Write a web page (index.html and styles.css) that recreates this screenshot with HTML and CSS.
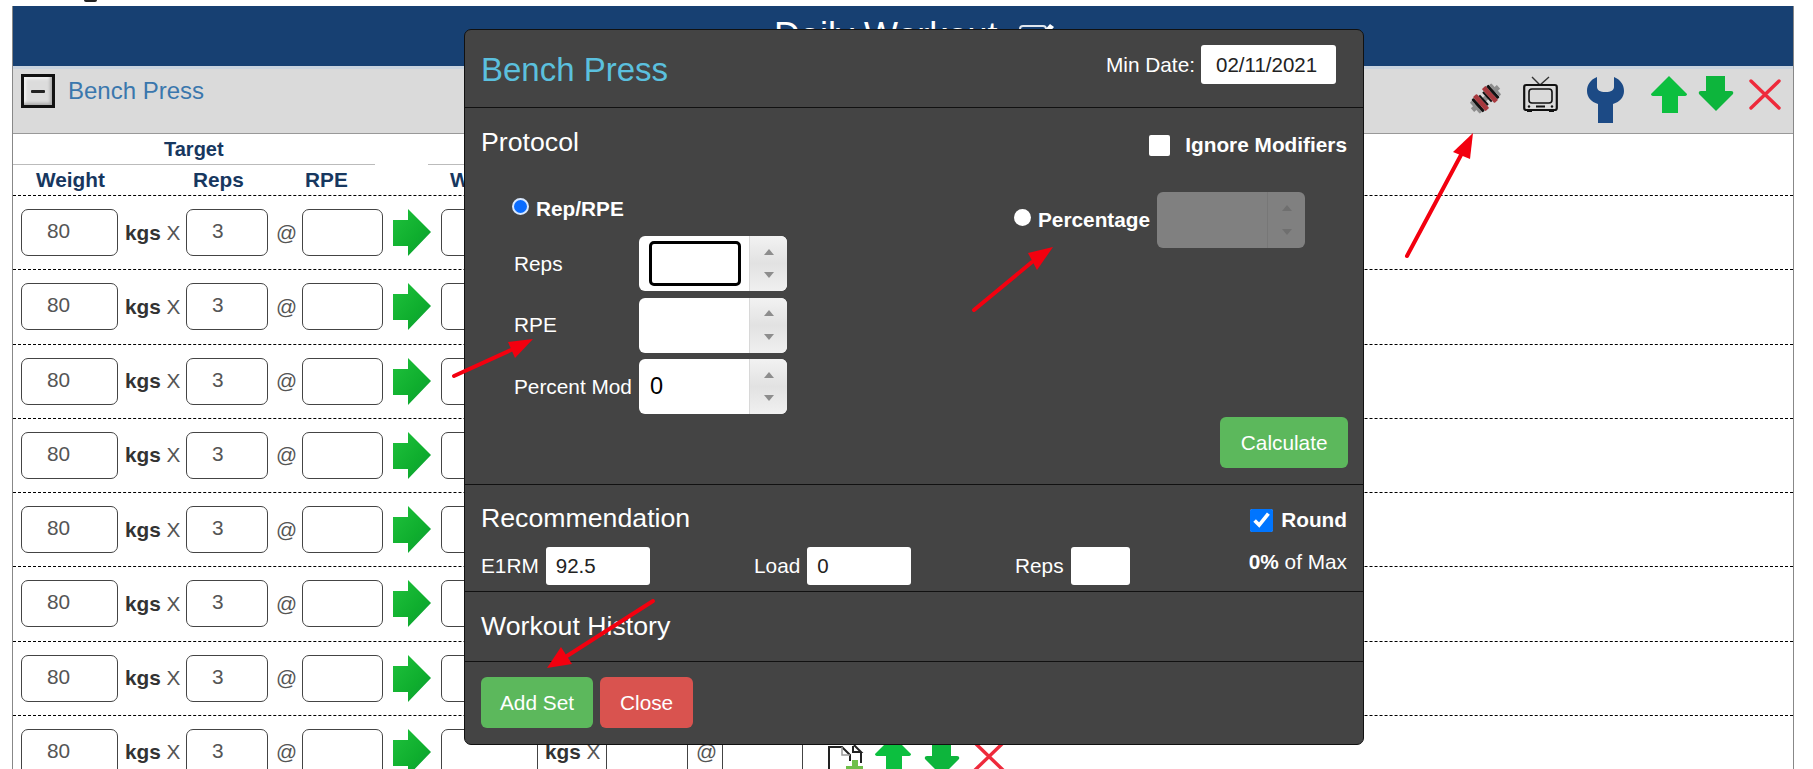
FILE: index.html
```html
<!DOCTYPE html>
<html lang="en">
<head>
  <meta charset="UTF-8">
  <title>Daily Workout</title>
  <link rel="stylesheet" href="styles.css">
</head>
<body>

<svg class="sprite" width="0" height="0">
  <defs>
    <linearGradient id="greenFill" x1="0" y1="0" x2="1" y2="1">
      <stop offset="0" stop-color="#1fc13c"/>
      <stop offset="0.6" stop-color="#0fae2e"/>
      <stop offset="1" stop-color="#0c9a35"/>
    </linearGradient>
  </defs>
  <symbol id="go" viewBox="0 0 38 47">
    <path d="M0 11 H15 V0 L38 23 L15 47 V37 H0 Z" fill="url(#greenFill)"/>
  </symbol>
  <symbol id="up" viewBox="0 0 36 37">
    <path d="M18 0 L36 18 Q36 20 33 20 H27 V37 H11 V20 H3 Q0 20 0 18 Z" fill="#0cbf3f"/>
  </symbol>
  <symbol id="down" viewBox="0 0 36 36">
    <path d="M8 0 H27 V15 H33 Q36 15 35 18 L18 35 L1 18 Q0 15 3 15 H8 Z" fill="#0db53c"/>
  </symbol>
  <symbol id="cross" viewBox="0 0 32 31">
    <path d="M2 2 L30 29 M30 2 L2 29" stroke="#ee2a3b" stroke-width="3.4" stroke-linecap="round" fill="none"/>
  </symbol>
  <symbol id="doc" viewBox="0 0 36 40">
    <path d="M1 39 V2 H14 L22 10 V16" fill="none" stroke="#222" stroke-width="2"/>
    <path d="M14 2 V10 H22" fill="none" stroke="#999" stroke-width="1.5"/>
    <path d="M25 1 V7 H33 L26 0 M33 7 V18" fill="none" stroke="#222" stroke-width="2"/>
    <path d="M24 15 H30 V21 H35 V27 H30 V33 H24 V27 H18 V21 H24 Z" fill="#6fbf4a"/>
  </symbol>
</svg>

<div class="cut-line"><span class="descender"></span></div>

<div class="panel">
  <div class="page-title">
    <h1>Daily Workout</h1>
    <svg class="edit-icon" viewBox="0 0 35 30" width="35" height="30">
      <rect x="1" y="3" width="26" height="24" rx="3" fill="none" stroke="#dfe6ee" stroke-width="2"/>
      <path d="M18 16 L31 1 L35 4 L22 19 Z" fill="#fff"/>
    </svg>
  </div>

  <div class="exercise-bar">
    <span class="toggle"><span class="toggle-minus"></span></span>
    <a class="exercise-name">Bench Press</a>
    <div class="tools">
      <svg class="tool-dumbbell" viewBox="0 0 35 33" width="35" height="33">
        <g transform="rotate(-42 17.5 16.5)">
          <rect x="0" y="14" width="35" height="5" fill="#8d8d8d"/>
          <rect x="3" y="9" width="3" height="15" rx="1" fill="#8d8d8d"/>
          <rect x="6" y="8" width="3" height="17" rx="1" fill="#111"/>
          <rect x="9" y="7" width="5" height="19" rx="1" fill="#a83a3f"/>
          <rect x="14" y="10" width="2" height="13" fill="#111"/>
          <rect x="19" y="10" width="2" height="13" fill="#111"/>
          <rect x="21" y="7" width="5" height="19" rx="1" fill="#a83a3f"/>
          <rect x="26" y="8" width="3" height="17" rx="1" fill="#111"/>
          <rect x="29" y="9" width="3" height="15" rx="1" fill="#8d8d8d"/>
        </g>
      </svg>
      <svg class="tool-tv" viewBox="0 0 35 37" width="35" height="37">
        <path d="M9 1 L17 9 L26 1" fill="none" stroke="#333" stroke-width="1.4"/>
        <rect x="1.2" y="9" width="32.6" height="25" rx="2" fill="none" stroke="#111" stroke-width="2.2"/>
        <rect x="6" y="13" width="23" height="14" rx="3" fill="none" stroke="#111" stroke-width="1.6"/>
        <path d="M13 30.5 H22" stroke="#111" stroke-width="2"/>
        <circle cx="6" cy="30.5" r="1.2" fill="#111"/>
        <circle cx="29" cy="30.5" r="1.2" fill="#111"/>
        <path d="M4 35 H9 M26 35 H31" stroke="#111" stroke-width="2"/>
      </svg>
      <svg class="tool-wrench" viewBox="0 0 37 47" width="37" height="47">
        <path d="M10 1 C3 4 0 9 0 15 C0 21 4 26 11 28 L11 47 L26 47 L26 28 C33 26 37 21 37 15 C37 9 34 4 27 1 L27 11 C27 14 24 16 18.5 16 C13 16 10 14 10 11 Z" fill="#1c4a85"/>
      </svg>
      <svg class="tool-up" width="36" height="37"><use href="#up"/></svg>
      <svg class="tool-down" width="36" height="36"><use href="#down"/></svg>
      <svg class="tool-cross" width="32" height="31"><use href="#cross"/></svg>
    </div>
  </div>

  <div class="group-row">
    <div class="group-target">Target</div>
    <div class="group-actual"></div>
  </div>

  <div class="set-grid set-head">
    <span class="head-weight">Weight</span>
    <span></span>
    <span class="head-reps">Reps</span>
    <span></span>
    <span class="head-rpe">RPE</span>
    <span></span>
    <span class="head-weight2">Weight</span>
  </div>

  <div class="set-grid set-row">
    <input class="cell" value="80"><span class="units"><b>kgs</b> X</span><input class="cell" value="3"><span class="at">@</span><input class="cell">
    <svg class="go" width="38" height="47"><use href="#go"/></svg>
    <input class="cell"><span class="units"><b>kgs</b> X</span><input class="cell"><span class="at">@</span><input class="cell">
    <div class="row-actions">
      <svg class="act-doc" width="36" height="40"><use href="#doc"/></svg>
      <svg class="act-up" width="36" height="37"><use href="#up"/></svg>
      <svg class="act-down" width="36" height="36"><use href="#down"/></svg>
      <svg class="act-cross" width="32" height="31"><use href="#cross"/></svg>
    </div>
  </div>
  <div class="set-grid set-row">
    <input class="cell" value="80"><span class="units"><b>kgs</b> X</span><input class="cell" value="3"><span class="at">@</span><input class="cell">
    <svg class="go" width="38" height="47"><use href="#go"/></svg>
    <input class="cell"><span class="units"><b>kgs</b> X</span><input class="cell"><span class="at">@</span><input class="cell">
    <div class="row-actions">
      <svg class="act-doc" width="36" height="40"><use href="#doc"/></svg>
      <svg class="act-up" width="36" height="37"><use href="#up"/></svg>
      <svg class="act-down" width="36" height="36"><use href="#down"/></svg>
      <svg class="act-cross" width="32" height="31"><use href="#cross"/></svg>
    </div>
  </div>
  <div class="set-grid set-row">
    <input class="cell" value="80"><span class="units"><b>kgs</b> X</span><input class="cell" value="3"><span class="at">@</span><input class="cell">
    <svg class="go" width="38" height="47"><use href="#go"/></svg>
    <input class="cell"><span class="units"><b>kgs</b> X</span><input class="cell"><span class="at">@</span><input class="cell">
    <div class="row-actions">
      <svg class="act-doc" width="36" height="40"><use href="#doc"/></svg>
      <svg class="act-up" width="36" height="37"><use href="#up"/></svg>
      <svg class="act-down" width="36" height="36"><use href="#down"/></svg>
      <svg class="act-cross" width="32" height="31"><use href="#cross"/></svg>
    </div>
  </div>
  <div class="set-grid set-row">
    <input class="cell" value="80"><span class="units"><b>kgs</b> X</span><input class="cell" value="3"><span class="at">@</span><input class="cell">
    <svg class="go" width="38" height="47"><use href="#go"/></svg>
    <input class="cell"><span class="units"><b>kgs</b> X</span><input class="cell"><span class="at">@</span><input class="cell">
    <div class="row-actions">
      <svg class="act-doc" width="36" height="40"><use href="#doc"/></svg>
      <svg class="act-up" width="36" height="37"><use href="#up"/></svg>
      <svg class="act-down" width="36" height="36"><use href="#down"/></svg>
      <svg class="act-cross" width="32" height="31"><use href="#cross"/></svg>
    </div>
  </div>
  <div class="set-grid set-row">
    <input class="cell" value="80"><span class="units"><b>kgs</b> X</span><input class="cell" value="3"><span class="at">@</span><input class="cell">
    <svg class="go" width="38" height="47"><use href="#go"/></svg>
    <input class="cell"><span class="units"><b>kgs</b> X</span><input class="cell"><span class="at">@</span><input class="cell">
    <div class="row-actions">
      <svg class="act-doc" width="36" height="40"><use href="#doc"/></svg>
      <svg class="act-up" width="36" height="37"><use href="#up"/></svg>
      <svg class="act-down" width="36" height="36"><use href="#down"/></svg>
      <svg class="act-cross" width="32" height="31"><use href="#cross"/></svg>
    </div>
  </div>
  <div class="set-grid set-row">
    <input class="cell" value="80"><span class="units"><b>kgs</b> X</span><input class="cell" value="3"><span class="at">@</span><input class="cell">
    <svg class="go" width="38" height="47"><use href="#go"/></svg>
    <input class="cell"><span class="units"><b>kgs</b> X</span><input class="cell"><span class="at">@</span><input class="cell">
    <div class="row-actions">
      <svg class="act-doc" width="36" height="40"><use href="#doc"/></svg>
      <svg class="act-up" width="36" height="37"><use href="#up"/></svg>
      <svg class="act-down" width="36" height="36"><use href="#down"/></svg>
      <svg class="act-cross" width="32" height="31"><use href="#cross"/></svg>
    </div>
  </div>
  <div class="set-grid set-row">
    <input class="cell" value="80"><span class="units"><b>kgs</b> X</span><input class="cell" value="3"><span class="at">@</span><input class="cell">
    <svg class="go" width="38" height="47"><use href="#go"/></svg>
    <input class="cell"><span class="units"><b>kgs</b> X</span><input class="cell"><span class="at">@</span><input class="cell">
    <div class="row-actions">
      <svg class="act-doc" width="36" height="40"><use href="#doc"/></svg>
      <svg class="act-up" width="36" height="37"><use href="#up"/></svg>
      <svg class="act-down" width="36" height="36"><use href="#down"/></svg>
      <svg class="act-cross" width="32" height="31"><use href="#cross"/></svg>
    </div>
  </div>
  <div class="set-grid set-row">
    <input class="cell" value="80"><span class="units"><b>kgs</b> X</span><input class="cell" value="3"><span class="at">@</span><input class="cell">
    <svg class="go" width="38" height="47"><use href="#go"/></svg>
    <input class="cell"><span class="units"><b>kgs</b> X</span><input class="cell"><span class="at">@</span><input class="cell">
    <div class="row-actions">
      <svg class="act-doc" width="36" height="40"><use href="#doc"/></svg>
      <svg class="act-up" width="36" height="37"><use href="#up"/></svg>
      <svg class="act-down" width="36" height="36"><use href="#down"/></svg>
      <svg class="act-cross" width="32" height="31"><use href="#cross"/></svg>
    </div>
  </div>
</div>

<!-- dialog -->
<div class="modal">
  <div class="modal-header">
    <h2 class="modal-title">Bench Press</h2>
    <label class="min-date">Min Date: <input class="date-input" value="02/11/2021"></label>
  </div>

  <div class="modal-section protocol">
    <div class="section-top">
      <h3>Protocol</h3>
      <label class="ignore"><input type="checkbox" class="plain-check"> Ignore Modifiers</label>
    </div>
    <div class="protocol-cols">
      <div class="protocol-left">
        <label class="radio-line"><input type="radio" name="mode" class="radio" checked> Rep/RPE</label>
        <div class="spin-grid">
          <span class="spin-label">Reps</span>
          <span class="spin"><span class="spin-box"><span class="focus-ring"></span></span><span class="spin-btns"><i class="tri-up"></i><i class="tri-down"></i></span></span>
          <span class="spin-label">RPE</span>
          <span class="spin"><span class="spin-box"></span><span class="spin-btns"><i class="tri-up"></i><i class="tri-down"></i></span></span>
          <span class="spin-label">Percent Mod</span>
          <span class="spin"><span class="spin-box spin-value">0</span><span class="spin-btns"><i class="tri-up"></i><i class="tri-down"></i></span></span>
        </div>
      </div>
      <div class="protocol-right">
        <label class="radio-line"><input type="radio" name="mode" class="radio"> Percentage</label>
        <span class="spin spin-disabled"><span class="spin-box"></span><span class="spin-btns"><i class="tri-up"></i><i class="tri-down"></i></span></span>
      </div>
    </div>
    <div class="calc-row"><button class="btn btn-success btn-calc">Calculate</button></div>
  </div>

  <div class="modal-section recommendation">
    <div class="section-top">
      <h3>Recommendation</h3>
      <label class="round"><input type="checkbox" class="round-check" checked> Round</label>
    </div>
    <div class="rec-fields">
      <label class="rec-field rec-e1rm">E1RM <input class="rec-input" value="92.5"></label>
      <label class="rec-field rec-load">Load <input class="rec-input" value="0"></label>
      <label class="rec-field rec-reps">Reps <input class="rec-input rec-small"></label>
      <span class="of-max"><b>0%</b> of Max</span>
    </div>
  </div>

  <div class="modal-section history">
    <h3>Workout History</h3>
  </div>

  <div class="modal-footer">
    <button class="btn btn-success">Add Set</button>
    <button class="btn btn-danger">Close</button>
  </div>
</div>

<!-- red annotation arrows drawn on the screenshot -->
<svg class="annotations" viewBox="0 0 1813 769" width="1813" height="769">
  <g stroke="#f3000f" stroke-width="4" stroke-linecap="round" fill="#f3000f">
    <line x1="1407" y1="256" x2="1461" y2="155"/>
    <polygon points="1473,133 1453,152 1470,159" stroke="none"/>
    <line x1="974" y1="310" x2="1032" y2="262"/>
    <polygon points="1053,247 1028,253 1037,270" stroke="none"/>
    <line x1="454" y1="376" x2="511" y2="350"/>
    <polygon points="533,339 508,342 515,358" stroke="none"/>
    <line x1="653" y1="601" x2="567" y2="656"/>
    <polygon points="547,668 572,664 561,647" stroke="none"/>
  </g>
</svg>

</body>
</html>
```

FILE: styles.css
```css
html, body {
  margin: 0;
  padding: 0;
  height: 769px;
  overflow: hidden;
  background-color: #fff;
}

body {
  position: relative;
  font-family: "Liberation Sans", Arial, sans-serif;
  font-size: 20.8px;
  color: #333;
}

.sprite {
  position: absolute;
}

.cut-line {
  height: 6px;
  padding-left: 84px;
}

.descender {
  display: block;
  width: 13px;
  height: 2px;
  background-color: #222;
  border-radius: 0 0 7px 7px;
}

.panel {
  margin: 0 19px 0 12px;
  border-left: 1px solid #888;
  border-right: 1px solid #888;
  height: 800px;
}

.page-title {
  display: flex;
  align-items: flex-start;
  height: 60px;
  padding-left: 761px;
  background-color: #174072;
  color: #fff;
  box-sizing: border-box;
}

.page-title h1 {
  margin: 8px 0 0;
  font-size: 36px;
  font-weight: normal;
  line-height: 44px;
}

.edit-icon {
  margin: 17px 0 0 22px;
}

.exercise-bar {
  display: flex;
  align-items: flex-start;
  height: 68px;
  box-sizing: border-box;
  border-top: 3px solid #c9d3de;
  border-bottom: 1px solid #999;
  background-color: #dadada;
  padding-left: 8px;
}

.toggle {
  display: flex;
  align-items: center;
  justify-content: center;
  width: 34px;
  height: 34px;
  margin-top: 5px;
  box-sizing: border-box;
  border: 3px solid #111;
  background-color: #dcdcdc;
  box-shadow: inset -2px -2px 3px #aaa, inset 2px 2px 3px #f4f4f4;
}

.toggle-minus {
  display: block;
  width: 14px;
  height: 3px;
  background-color: #222;
  border-radius: 1px;
}

.exercise-name {
  margin: 8px 0 0 13px;
  font-size: 24px;
  line-height: 28px;
  color: #3a77ad;
}

.tools {
  display: flex;
  align-items: flex-start;
  margin-left: auto;
  padding-right: 12px;
}

.tool-dumbbell { margin-top: 13px; }
.tool-tv { margin: 7px 0 0 20px; }
.tool-wrench { margin: 7px 0 0 29px; }
.tool-up { margin: 7px 0 0 27px; }
.tool-down { margin: 7px 0 0 11px; }
.tool-cross { margin: 10px 0 0 15px; }

/* header of the sets table */
.group-row {
  display: flex;
  height: 31px;
}

.group-target {
  width: 362px;
  padding-left: 151px;
  box-sizing: border-box;
  border-bottom: 1px solid #bbb;
  font-weight: bold;
  font-size: 20px;
  line-height: 30px;
  color: #17375f;
}

.group-actual {
  width: 400px;
  margin-left: 53px;
  border-bottom: 1px solid #bbb;
}

.set-grid {
  display: grid;
  grid-template-columns: 97px 68px 82px 34px 81px 58px 97px 68px 82px 34px 81px 1fr;
  padding-left: 8px;
  box-sizing: border-box;
  border-bottom: 1px dashed #000;
}

.set-head {
  height: 31px;
  font-weight: bold;
  line-height: 30px;
  color: #17375f;
}

.head-weight { padding-left: 15px; }
.head-reps { padding-left: 7px; }
.head-rpe { padding-left: 3px; }
.head-weight2 { padding-left: 9px; }

.set-row {
  height: 74.25px;
  align-items: center;
  color: #555;
}

.cell {
  width: 100%;
  height: 47px;
  box-sizing: border-box;
  padding: 0 0 3px 25px;
  border: 1px solid #444;
  border-radius: 7px;
  font-family: inherit;
  font-size: 20.8px;
  color: #555;
  background-color: #fff;
}

.units {
  padding-left: 7px;
  white-space: nowrap;
}

.units b {
  color: #333;
}

.at {
  padding-left: 8px;
}

.go {
  margin-left: 10px;
}

.row-actions {
  display: flex;
  align-items: flex-start;
  align-self: start;
  padding-left: 25px;
}

.act-doc { margin-top: 29px; }
.act-up { margin: 20px 0 0 11px; }
.act-down { margin: 25px 0 0 13px; }
.act-cross { margin: 25px 0 0 13px; }

/* dialog */
.modal {
  position: absolute;
  top: 29px;
  left: 464px;
  width: 900px;
  height: 716px;
  box-sizing: border-box;
  background-color: #444;
  border: 1px solid #111;
  border-radius: 7px;
  color: #fff;
}

.modal-header {
  display: flex;
  justify-content: space-between;
  height: 78px;
  box-sizing: border-box;
  padding: 15px 27px 0 16px;
  border-bottom: 1px solid #111;
}

.modal-title {
  margin: 2px 0 0;
  font-size: 33px;
  font-weight: normal;
  line-height: 45px;
  color: #5bc0de;
}

.min-date {
  display: flex;
  align-items: center;
  gap: 6px;
  height: 39px;
}

.date-input {
  width: 135px;
  height: 39px;
  box-sizing: border-box;
  padding: 0 0 0 15px;
  border: 0;
  border-radius: 3px;
  font-family: inherit;
  font-size: 20.5px;
  color: #222;
}

.modal-section {
  padding: 19px 15px 0 16px;
  border-bottom: 1px solid #111;
}

.modal-section h3 {
  margin: 0;
  font-size: 26.7px;
  font-weight: normal;
  line-height: 30px;
}

.section-top {
  display: flex;
  justify-content: space-between;
  align-items: flex-start;
}

.protocol {
  height: 377px;
  box-sizing: border-box;
}

.ignore {
  display: flex;
  align-items: center;
  gap: 15px;
  margin-top: 6px;
  margin-right: 1px;
  font-weight: bold;
}

.plain-check {
  appearance: none;
  width: 21px;
  height: 21px;
  margin: 0;
  background-color: #fff;
  border-radius: 2px;
}

.protocol-cols {
  display: flex;
  margin-top: 35px;
  height: 222px;
}

.protocol-left {
  width: 533px;
  box-sizing: border-box;
  padding-left: 31px;
}

.radio-line {
  display: flex;
  align-items: center;
  gap: 7px;
  font-weight: bold;
}

.protocol-left .radio-line {
  height: 34px;
  margin-bottom: 10px;
}

.radio {
  appearance: none;
  width: 17px;
  height: 17px;
  margin: -6px 0 0;
  border-radius: 50%;
  background-color: #fff;
}

.radio:checked {
  background-color: #0a6cff;
  border: 2.5px solid #d8e8ff;
  box-sizing: border-box;
}

.protocol-right {
  display: flex;
  align-items: center;
  align-self: flex-start;
  gap: 7px;
}

.spin-grid {
  display: grid;
  grid-template-columns: 125px 148px;
  grid-auto-rows: 55px;
  row-gap: 6.5px;
  align-items: center;
  padding-left: 2px;
}

.spin-label {
  white-space: nowrap;
}

.spin {
  display: flex;
  width: 148px;
  height: 55px;
  background-color: #fff;
  border-radius: 6px;
  overflow: hidden;
  color: #000;
}

.spin-box {
  display: flex;
  align-items: center;
  flex: 1;
}

.spin-value {
  padding-left: 11px;
  font-size: 23.5px;
}

.focus-ring {
  display: block;
  width: 92px;
  height: 45px;
  margin-left: 10px;
  box-sizing: border-box;
  border: 3px solid #000;
  border-radius: 5px;
}

.spin-btns {
  display: flex;
  flex-direction: column;
  align-items: center;
  justify-content: space-around;
  width: 38px;
  padding: 4px 0;
  box-sizing: border-box;
  border-left: 1px solid #d8d8d8;
  background: linear-gradient(#f2f2f2, #e2e2e2 50%, #f0f0f0);
}

.tri-up, .tri-down {
  display: block;
  border-left: 5px solid transparent;
  border-right: 5px solid transparent;
}

.tri-up { border-bottom: 6px solid #8d8d8d; }
.tri-down { border-top: 6px solid #8d8d8d; }

.spin-disabled {
  height: 56px;
  background-color: #808080;
}

.spin-disabled .spin-btns {
  background: none;
  border-left: 1px solid #777;
}

.spin-disabled .tri-up { border-bottom-color: #6f6f6f; }
.spin-disabled .tri-down { border-top-color: #6f6f6f; }

.calc-row {
  display: flex;
  justify-content: flex-end;
  margin-top: 3px;
}

.btn {
  height: 51px;
  padding: 0 18px;
  border: 1px solid transparent;
  border-radius: 6px;
  font-family: inherit;
  font-size: 20.8px;
  color: #fff;
}

.btn-calc {
  padding: 0 19.5px;
}

.btn-success {
  background-color: #5cb85c;
}

.btn-danger {
  margin-left: 1px;
  padding: 0 19px;
  background-color: #d9534f;
}

.recommendation {
  height: 107px;
  box-sizing: border-box;
  padding-top: 18px;
}

.round {
  display: flex;
  align-items: center;
  gap: 8px;
  margin-top: 5px;
  margin-right: 1px;
  font-weight: bold;
}

.round-check {
  width: 23px;
  height: 23px;
  margin: 0;
}

.rec-fields {
  display: flex;
  margin-top: 14px;
}

.rec-field {
  display: flex;
  align-items: center;
  gap: 7px;
}

.rec-e1rm { width: 273px; }
.rec-load { width: 261px; }

.rec-input {
  width: 104px;
  height: 38px;
  box-sizing: border-box;
  padding: 0 0 0 10px;
  border: 0;
  border-radius: 3px;
  font-family: inherit;
  font-size: 20.5px;
  color: #222;
}

.rec-small {
  width: 59px;
}

.of-max {
  margin-left: auto;
  margin-right: 1px;
  line-height: 30px;
}

.history {
  height: 70px;
  box-sizing: border-box;
}

.modal-footer {
  display: flex;
  gap: 6px;
  padding: 15px 16px 0;
}

.annotations {
  position: absolute;
  top: 0;
  left: 0;
  pointer-events: none;
}
```
